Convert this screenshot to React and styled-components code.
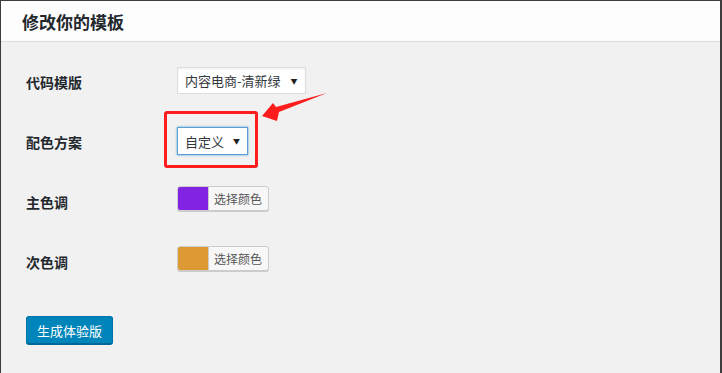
import styled, { createGlobalStyle } from "styled-components";

const Global = createGlobalStyle`
  html, body { margin: 0; padding: 0; background: #f1f1f1; }
  body { font-family: "Noto Sans CJK SC", "Noto Sans", sans-serif; }
`;

const Frame = styled.div`
  position: relative;
  box-sizing: border-box;
  width: 722px;
  height: 373px;
  border-top: 1px solid #3c3c3c;
  border-left: 1px solid #3c3c3c;
  border-right: 2px solid #3c3c3c;
  background: #f1f1f1;
  overflow: hidden;
`;

const Header = styled.div`
  height: 40px;
  background: #fdfdfd;
  border-bottom: 1px solid #dcdcdc;
  display: flex;
  align-items: center;
  padding-left: 21px;
`;

const Title = styled.h2`
  margin: 0;
  font-size: 17px;
  font-weight: 700;
  color: #23282d;
`;

const Form = styled.div`
  padding: 15px 0 0 25px;
`;

const Row = styled.div`
  display: grid;
  grid-template-columns: 151px auto;
  align-items: start;
  height: 60px;
`;

const Label = styled.div`
  padding-top: 15px;
  line-height: 20px;
  font-size: 14px;
  font-weight: 700;
  color: #23282d;
`;

const Field = styled.div`
  padding-top: ${(p) => p.$offset}px;
  display: flex;
`;

const Select = styled.div`
  position: relative;
  box-sizing: border-box;
  height: ${(p) => (p.$focus ? 28 : 27)}px;
  display: flex;
  align-items: center;
  padding: 0 7px;
  background: #fff;
  border: 1px solid ${(p) => (p.$focus ? "#5b9dd9" : "#dddddd")};
  box-shadow: ${(p) => (p.$focus ? "0 0 2px rgba(30,140,190,.8)" : "0 1px 2px rgba(0,0,0,.07) inset")};
  font-size: 13px;
  color: #32373c;
`;

const Caret = styled.span`
  font-size: 7px;
  color: #222;
  margin-left: ${(p) => p.$gap}px;
`;

const Highlight = styled.div`
  position: absolute;
  left: -14px;
  top: -17px;
  width: 94px;
  height: 57px;
  box-sizing: border-box;
  border: 3px solid #ff1c1c;
  border-radius: 3px;
  pointer-events: none;
`;

const ColorButton = styled.div`
  box-sizing: border-box;
  display: flex;
  height: 25px;
  border: 1px solid #cccccc;
  border-radius: 3px;
  overflow: hidden;
  background: #f7f7f7;
  box-shadow: 0 1px 0 #ccc;
`;

const Swatch = styled.span`
  width: 30px;
  background: ${(p) => p.$color};
  border-right: 1px solid #ccc;
`;

const SwatchText = styled.span`
  display: flex;
  align-items: center;
  padding: 0 6px 0 5px;
  font-size: 12px;
  color: #555;
`;

const Submit = styled.button`
  margin-top: 19px;
  height: 28px;
  padding: 0 10px;
  border: 1px solid #0073aa;
  border-bottom-color: #006799;
  border-radius: 3px;
  background: #0085ba;
  box-shadow: 0 1px 0 #006799;
  color: #fff;
  font-family: inherit;
  font-size: 13px;
  cursor: pointer;
`;

const Pointer = styled.svg`
  position: absolute;
  left: 254px;
  top: 84px;
  pointer-events: none;
`;

function Arrow() {
  return (
    <Pointer width="80" height="45" viewBox="254 84 80 45">
      <polygon
        points="261,115 272,102 275,106 326,92 278,111 276,120"
        fill="#ff1c1c"
      />
    </Pointer>
  );
}

export default function App() {
  return (
    <>
      <Global />
      <Frame>
        <Header>
          <Title>修改你的模板</Title>
        </Header>
        <Form>
          <Row>
            <Label>代码模版</Label>
            <Field $offset={10}>
              <Select>
                内容电商-清新绿
                <Caret $gap={10}>▼</Caret>
              </Select>
            </Field>
          </Row>
          <Row>
            <Label>配色方案</Label>
            <Field $offset={10}>
              <Select $focus>
                自定义
                <Caret $gap={9}>▼</Caret>
                <Highlight />
              </Select>
            </Field>
          </Row>
          <Row>
            <Label>主色调</Label>
            <Field $offset={9}>
              <ColorButton>
                <Swatch $color="#8224e3" />
                <SwatchText>选择颜色</SwatchText>
              </ColorButton>
            </Field>
          </Row>
          <Row>
            <Label>次色调</Label>
            <Field $offset={9}>
              <ColorButton>
                <Swatch $color="#dd9933" />
                <SwatchText>选择颜色</SwatchText>
              </ColorButton>
            </Field>
          </Row>
          <Submit>生成体验版</Submit>
        </Form>
        <Arrow />
      </Frame>
    </>
  );
}
